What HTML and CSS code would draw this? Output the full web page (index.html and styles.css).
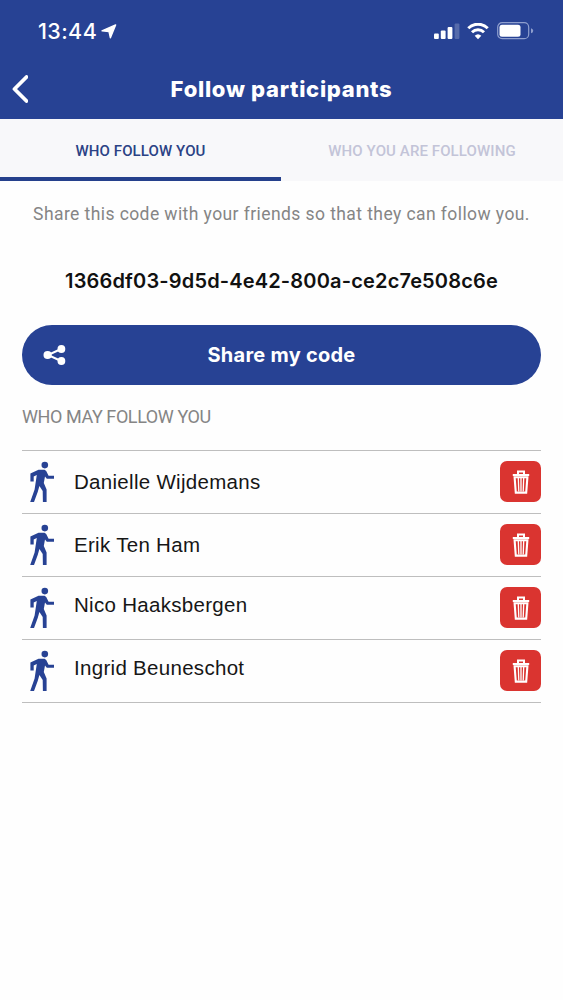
FILE: index.html
```html
<!DOCTYPE html>
<html lang="en">
<head>
  <meta charset="UTF-8">
  <meta name="viewport" content="width=device-width, initial-scale=1.0">
  <title>Follow participants</title>
  <link rel="stylesheet" href="styles.css">
</head>
<body>
  <!-- Shared icons -->
  <svg class="icon-defs" width="0" height="0">
    <symbol id="walker" viewBox="0 0 26 42">
      <circle cx="15.8" cy="4.1" r="3.3"/>
      <path d="M9.5 8.8 15.6 8.8 17.2 10 19.6 14.8 25 14.8 25 17.8 17.8 17.8 16 15.6 14.8 22 17.6 28.5 17.6 41 13.9 41 13.7 30 10.4 25 8.8 30.8 5 41 1.2 41 5.6 28.5 7.8 14 4.7 15.4 4.7 20.5 1.4 20.5 1.4 12.4Z"/>
    </symbol>
    <symbol id="trash" viewBox="0 0 18 24">
      <path d="M6 4V1.4H12V4M.8 4.9H17.2" fill="none" stroke="currentColor" stroke-width="2"/>
      <path d="M2.6 7.2 3.8 22.6H14.2L15.4 7.2Z" fill="none" stroke="currentColor" stroke-width="2.1"/>
      <path d="M6.3 8 6.8 21.5M9 8V21.5M11.7 8 11.2 21.5" fill="none" stroke="currentColor" stroke-width="1.3"/>
    </symbol>
  </svg>

  <header class="header">
    <div class="status-bar">
      <span class="time">13:44</span>
      <svg class="location" width="16" height="15" viewBox="0 0 16 15"><path d="M14.6 .9 9.4 13.8 8 7.6 1 6.8Z" fill="#fff" stroke="#fff" stroke-width="1.4" stroke-linejoin="round"/></svg>
      <svg class="signal" width="26" height="17" viewBox="0 0 26 17" fill="#fff">
        <rect x="0" y="10.5" width="4.8" height="5.5" rx="1"/>
        <rect x="6.8" y="7.5" width="4.8" height="8.5" rx="1"/>
        <rect x="13.6" y="4" width="4.8" height="12" rx="1"/>
        <rect x="20.6" y=".5" width="4.8" height="15.5" rx="1" opacity=".22"/>
      </svg>
      <svg class="wifi" width="22" height="17" viewBox="0 0 22 17">
        <path d="M1.3 5.2a13.8 13.8 0 0 1 19.4 0M5 9.3a8.6 8.6 0 0 1 12 0" fill="none" stroke="#fff" stroke-width="3"/>
        <path d="M7.7 12.7a4.8 4.8 0 0 1 6.6 0L11 16.2Z" fill="#fff"/>
      </svg>
      <svg class="battery" width="37" height="18" viewBox="0 0 37 18">
        <rect x=".7" y=".7" width="31" height="16" rx="4.5" fill="none" stroke="#8f9fce" stroke-width="1.2"/>
        <rect x="2.5" y="2.7" width="21" height="12" rx="2.5" fill="#fff"/>
        <path d="M34 6.2q2.2.5 2.2 2.5T34 11.2Z" fill="#8f9fce"/>
      </svg>
    </div>
    <div class="title-bar">
      <button class="back" aria-label="Back">
        <svg width="18" height="28" viewBox="0 0 18 28"><path d="M17 2 5 14 17 26" fill="none" stroke="#fff" stroke-width="3.8" stroke-linecap="round" stroke-linejoin="round" transform="translate(-.5 0)"/></svg>
      </button>
      <h1>Follow participants</h1>
    </div>
  </header>

  <nav class="tabs">
    <button class="tab active"><span>WHO FOLLOW YOU</span></button>
    <button class="tab"><span>WHO YOU ARE FOLLOWING</span></button>
  </nav>

  <main class="content">
    <p class="intro">Share this code with your friends so that they can follow you.</p>
    <p class="code">1366df03-9d5d-4e42-800a-ce2c7e508c6e</p>
    <button class="share">
      <svg width="24" height="22" viewBox="0 0 24 22" fill="#fff">
        <path d="M18 5 5 11 18 17" fill="none" stroke="#fff" stroke-width="2"/>
        <circle cx="4.6" cy="11" r="4.1"/>
        <circle cx="18.4" cy="5" r="3.9"/>
        <circle cx="18.4" cy="17" r="3.9"/>
      </svg>
      <span>Share my code</span>
    </button>

    <h2>WHO MAY FOLLOW YOU</h2>
    <ul class="followers">
      <li>
        <svg class="walker"><use href="#walker"/></svg>
        <span class="name">Danielle Wijdemans</span>
        <button class="delete" aria-label="Delete"><svg><use href="#trash"/></svg></button>
      </li>
      <li>
        <svg class="walker"><use href="#walker"/></svg>
        <span class="name">Erik Ten Ham</span>
        <button class="delete" aria-label="Delete"><svg><use href="#trash"/></svg></button>
      </li>
      <li>
        <svg class="walker"><use href="#walker"/></svg>
        <span class="name raised">Nico Haaksbergen</span>
        <button class="delete" aria-label="Delete"><svg><use href="#trash"/></svg></button>
      </li>
      <li>
        <svg class="walker"><use href="#walker"/></svg>
        <span class="name raised">Ingrid Beuneschot</span>
        <button class="delete" aria-label="Delete"><svg><use href="#trash"/></svg></button>
      </li>
    </ul>
  </main>
</body>
</html>
```
FILE: styles.css
```css
* {
  box-sizing: border-box;
}

body {
  margin: 0;
  min-height: 100vh;
  background: #fefefe;
  font-family: Roboto, "Liberation Sans", sans-serif;
}

button {
  border: none;
  padding: 0;
  font-family: inherit;
  cursor: pointer;
}

h1,
h2,
p,
ul {
  margin: 0;
  padding: 0;
}

svg {
  display: block;
  flex-shrink: 0;
}

.icon-defs {
  display: none;
}

/* Header with status bar and title */
.header {
  height: 119px;
  background: #274294;
  color: #fff;
}

.status-bar {
  height: 60px;
  padding: 2px 29px 0 38px;
  display: flex;
  align-items: center;
}

.time {
  font-family: Inter, sans-serif;
  font-size: 21.5px;
  font-weight: 500;
  letter-spacing: 0.4px;
}

.location {
  margin-left: 4px;
}

.signal {
  margin-left: auto;
}

.wifi {
  margin: 0 8px 0 7px;
}

.title-bar {
  height: 59px;
  display: grid;
  grid-template-columns: 40px 1fr 40px;
  align-items: center;
}

.back {
  padding: 0 0 2px 10px;
  background: transparent;
}

h1 {
  padding-bottom: 1px;
  font-family: Inter, sans-serif;
  font-size: 22px;
  font-weight: 800;
  text-align: center;
  letter-spacing: 0.7px;
}

/* Tabs */
.tabs {
  height: 62px;
  display: grid;
  grid-template-columns: 281px 1fr;
  background: #f8f8fa;
}

.tab {
  padding-top: 5px;
  background: transparent;
  border-bottom: 4px solid transparent;
  color: #c3c4d8;
  font-size: 15px;
  font-weight: 500;
  letter-spacing: 0.1px;
}

.tab.active {
  border-color: #25408c;
  color: #2b4285;
}

/* Page content */
.content {
  padding: 21px 22px 0;
}

.intro {
  line-height: 24px;
  font-size: 17.5px;
  color: #858585;
  text-align: center;
  white-space: nowrap;
  letter-spacing: 0.42px;
}

.code {
  margin-top: 42px;
  line-height: 26px;
  font-family: Inter, sans-serif;
  font-size: 20px;
  font-weight: 600;
  color: #111;
  text-align: center;
  white-space: nowrap;
  letter-spacing: 0.17px;
}

.share {
  width: 519px;
  height: 60px;
  margin-top: 30.5px;
  padding: 0 21px;
  display: grid;
  grid-template-columns: 24px 1fr 24px;
  align-items: center;
  border-radius: 30px;
  background: #274294;
  color: #fff;
  font-family: Inter, sans-serif;
  font-size: 20px;
  font-weight: 700;
  letter-spacing: 0.25px;
}

h2 {
  height: 65.5px;
  padding-top: 20.5px;
  line-height: 24px;
  font-size: 18px;
  font-weight: 400;
  color: #858585;
  letter-spacing: -0.42px;
}

/* Follower list */
.followers {
  list-style: none;
  border-top: 1px solid #bebebe;
}

.followers li {
  height: 63px;
  padding-bottom: 1px;
  display: flex;
  align-items: center;
  border-bottom: 1px solid #bebebe;
}

.walker {
  width: 26px;
  height: 42px;
  margin-left: 7px;
  fill: #274294;
}

.name {
  flex: 1;
  margin-left: 19px;
  font-family: "Liberation Sans", Arial, sans-serif;
  font-size: 20.5px;
  color: #161616;
  letter-spacing: 0.3px;
}

.raised {
  padding-bottom: 5px;
}

.delete {
  width: 41px;
  height: 41px;
  display: flex;
  justify-content: center;
  align-items: center;
  border-radius: 7px;
  background: #da3430;
  color: #fff;
}

.delete svg {
  width: 18px;
  height: 24px;
}
```
